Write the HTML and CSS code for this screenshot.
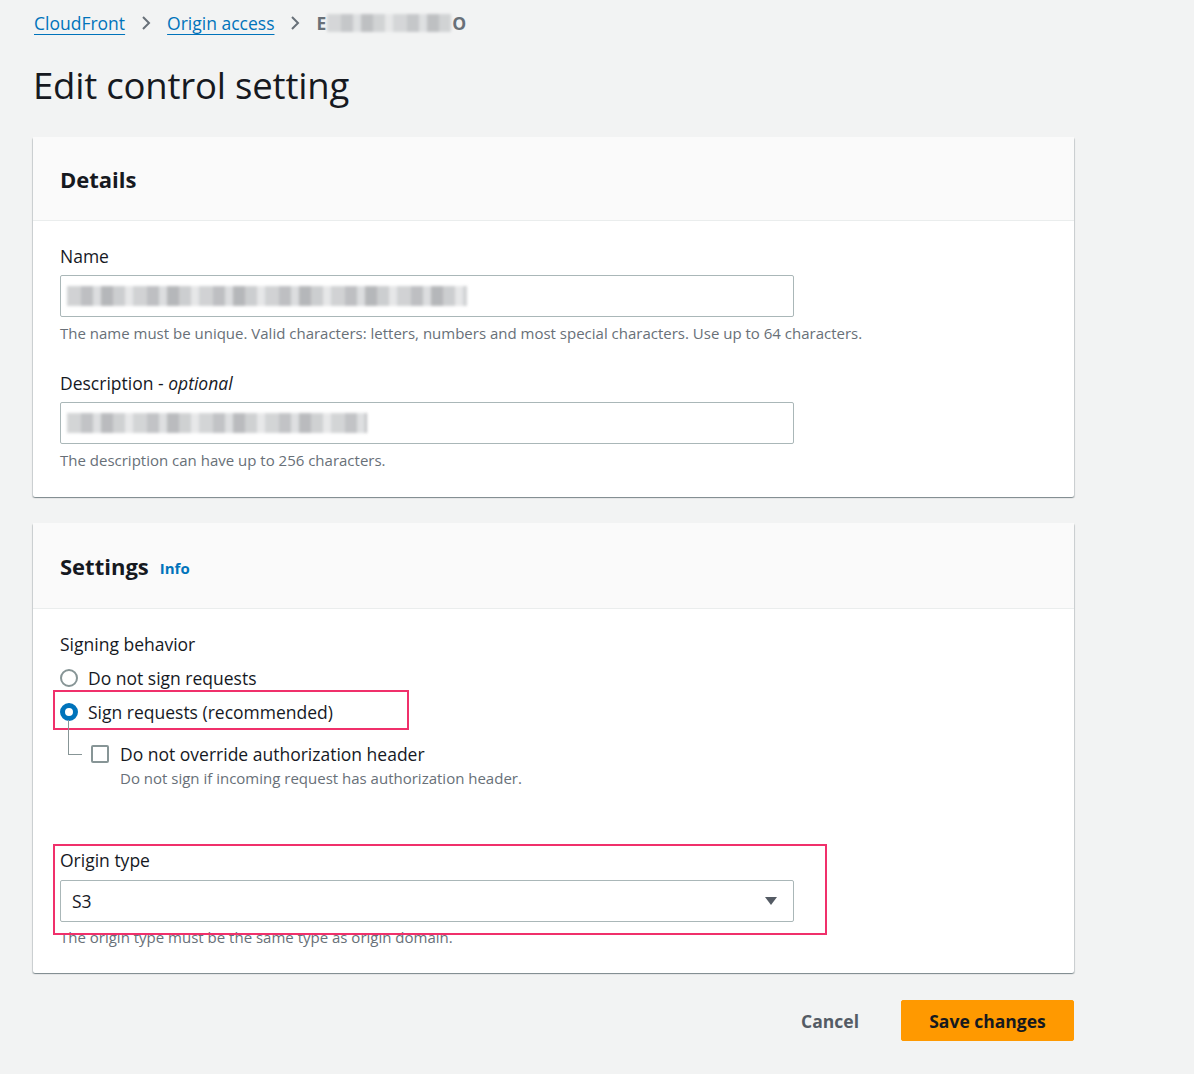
FILE: index.html
```html
<!DOCTYPE html>
<html>
<head>
<meta charset="utf-8">
<link rel="stylesheet" href="styles.css">
</head>
<body>
<div class="page">
  <nav class="crumbs">
    <a class="crumb-link">CloudFront</a>
    <svg class="chev" width="12" height="16" viewBox="0 0 12 16"><polyline points="3,2 9,8 3,14" fill="none" stroke="#687078" stroke-width="2"/></svg>
    <a class="crumb-link">Origin access</a>
    <svg class="chev" width="12" height="16" viewBox="0 0 12 16"><polyline points="3,2 9,8 3,14" fill="none" stroke="#687078" stroke-width="2"/></svg>
    <span class="crumb-current">E<span class="blur blur-crumb"></span>O</span>
  </nav>
  <h1 class="title">Edit control setting</h1>

  <section class="card">
    <div class="card-header"><h2>Details</h2></div>
    <div class="card-body">
      <div class="field">
        <div class="label">Name</div>
        <div class="input"><span class="blur blur-name"></span></div>
        <div class="help">The name must be unique. Valid characters: letters, numbers and most special characters. Use up to 64 characters.</div>
      </div>
      <div class="field field-next">
        <div class="label">Description - <i>optional</i></div>
        <div class="input"><span class="blur blur-desc"></span></div>
        <div class="help">The description can have up to 256 characters.</div>
      </div>
    </div>
  </section>

  <section class="card card-second">
    <div class="card-header"><h2>Settings</h2><a class="info">Info</a></div>
    <div class="card-body body-settings">
      <div class="label">Signing behavior</div>
      <div class="radio-row first-radio"><span class="radio"></span><span>Do not sign requests</span></div>
      <div class="radio-row second-radio">
        <span class="radio radio-on"></span><span>Sign requests (recommended)</span>
        <div class="mark mark-radio"></div>
      </div>
      <div class="check-row">
        <span class="tree"></span>
        <span class="checkbox"></span>
        <div class="check-text">
          <div class="check-label">Do not override authorization header</div>
          <div class="help">Do not sign if incoming request has authorization header.</div>
        </div>
      </div>
      <div class="field origin-field">
        <div class="label">Origin type</div>
        <div class="input select"><span class="select-value">S3</span>
          <svg class="caret" width="14" height="10" viewBox="0 0 14 10"><polygon points="1,1 13,1 7,9" fill="#545b64"/></svg>
        </div>
        <div class="help help-origin">The origin type must be the same type as origin domain.</div>
        <div class="mark mark-origin"></div>
      </div>
    </div>
  </section>

  <div class="actions">
    <button class="btn-link">Cancel</button>
    <button class="btn-primary">Save changes</button>
  </div>
</div>
</body>
</html>
```
FILE: styles.css
```css
* { box-sizing: border-box; }
html, body { margin: 0; padding: 0; }
body {
  background: #f2f3f3;
  font-family: "Open Sans", "Noto Sans", sans-serif;
  color: #16191f;
  width: 1194px;
  height: 1074px;
  overflow: hidden;
}
.page { padding: 0 120px 0 33px; }

.crumbs {
  display: flex;
  align-items: center;
  height: 46px;
  font-size: 17.5px;
  padding-left: 1px;
}
.crumb-link {
  color: #0073bb;
  text-decoration: underline;
  text-underline-offset: 4px;
  text-decoration-thickness: 1px;
}
.chev { margin: 0 15px 0 15px; }
.crumb-current { color: #687078; font-weight: 700; display: flex; align-items: center; }
.blur {
  display: inline-block;
  background:
    repeating-linear-gradient(90deg, #c9cbcd 0 14px, #b3b5b8 14px 26px, #d6d8da 26px 34px, #a9abae 34px 46px, #c4c6c8 46px 58px, #e2e3e4 58px 66px);
  filter: blur(1.6px);
}
.blur-crumb { width: 124px; height: 18px; margin: 0 1px; opacity: .7; }

.title {
  font-size: 36.5px;
  font-weight: 400;
  margin: 17px 0 30px;
  line-height: 44px;
  letter-spacing: -0.2px;
}

.card {
  background: #fff;
  border-radius: 2px;
  box-shadow: 0 1px 1px 0 rgba(0,28,36,.3), 1px 1px 1px 0 rgba(0,28,36,.15), -1px 1px 1px 0 rgba(0,28,36,.15);
}
.card-second { margin-top: 26px; }
.card-header {
  background: #fafafa;
  border-bottom: 1px solid #eaeded;
  height: 84px;
  padding: 0 27px;
  display: flex;
  align-items: center;
  gap: 11px;
}
.card-second .card-header { height: 86px; }
.card-header h2 { margin: 0; font-size: 22px; font-weight: 700; }
.info { color: #0073bb; font-weight: 700; font-size: 15px; margin-top: 5px; }

.card-body { padding: 23px 27px 27px; }
.label { font-size: 17.5px; line-height: 24px; }
.label i { font-style: italic; }
.input {
  margin-top: 7px;
  width: 734px;
  height: 42px;
  border: 1px solid #aab7b8;
  border-radius: 2px;
  display: flex;
  align-items: center;
  padding-left: 6px;
}
.blur-name { width: 400px; height: 20px; opacity: .85; }
.blur-desc { width: 300px; height: 20px; opacity: .8; }
.help { font-size: 15px; line-height: 20px; color: #687078; margin-top: 6px; }
.field-next { margin-top: 28px; }

.body-settings { padding-bottom: 26px; }
.radio-row {
  position: relative;
  display: flex;
  align-items: center;
  gap: 10px;
  font-size: 17.5px;
  line-height: 24px;
  height: 24px;
}
.first-radio { margin-top: 10px; }
.second-radio { margin-top: 10px; }
.radio {
  width: 18px; height: 18px;
  border-radius: 50%;
  border: 2px solid #879596;
  background: #fff;
  flex: none;
}
.radio-on { border: 5px solid #0073bb; }
.mark {
  position: absolute;
  border: 2.5px solid #f0306b;
  pointer-events: none;
}
.mark-radio { left: -7px; top: -10px; width: 356px; height: 40px; }

.check-row {
  position: relative;
  display: flex;
  margin-top: 18px;
  padding-left: 31px;
}
.tree {
  position: absolute;
  left: 8px; top: -22px;
  width: 14px; height: 35px;
  border-left: 1px solid #879596;
  border-bottom: 1px solid #879596;
}
.checkbox {
  width: 18px; height: 18px;
  border: 2px solid #879596;
  border-radius: 2px;
  margin-top: 3px;
  flex: none;
}
.check-text { margin-left: 11px; }
.check-label { font-size: 17.5px; line-height: 24px; }
.check-text .help { margin-top: 0; line-height: 24px; }

.origin-field { position: relative; margin-top: 58px; }
.origin-field .input { margin-top: 8px; }
.select { padding-left: 11px; justify-content: space-between; padding-right: 15px; }
.select-value { font-size: 17.5px; }
.help-origin { margin-top: 5px; }
.mark-origin { left: -7px; top: -4px; width: 774px; height: 91px; }

.actions {
  display: flex;
  justify-content: flex-end;
  align-items: center;
  margin-top: 27px;
  width: 1041px;
  gap: 22px;
}
.btn-link {
  background: none; border: none;
  font-family: inherit; font-weight: 700; font-size: 17.5px;
  color: #545b64;
  padding: 0 20px;
}
.btn-primary {
  background: #ff9900;
  border: 1px solid #ff9900;
  border-radius: 2px;
  font-family: inherit; font-weight: 700; font-size: 17.5px;
  color: #16191f;
  width: 173px; height: 41px;
}
```
